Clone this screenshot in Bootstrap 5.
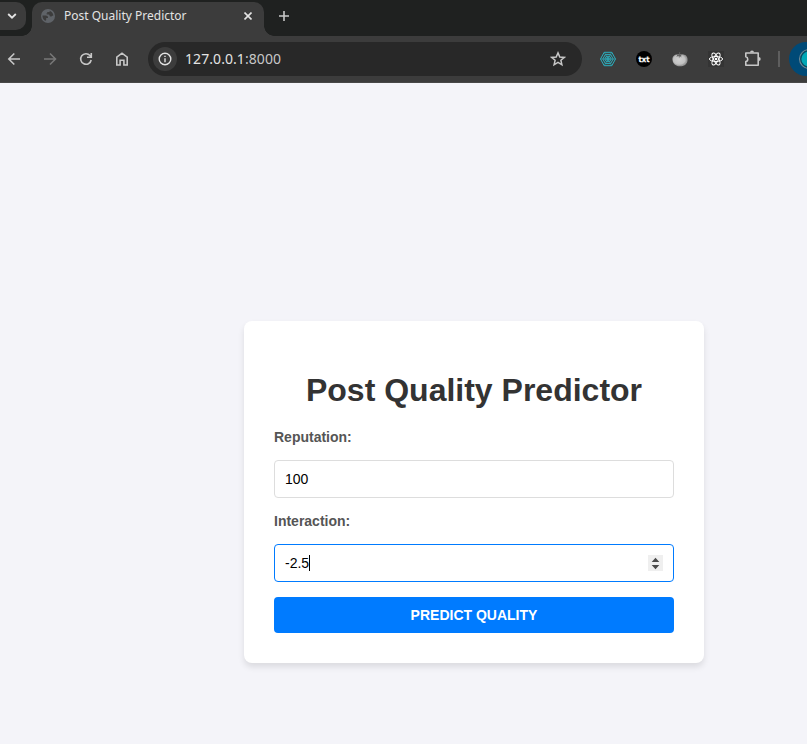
<!DOCTYPE html>
<html lang="en">
<head>
<meta charset="utf-8">
<meta name="viewport" content="width=device-width, initial-scale=1">
<title>Post Quality Predictor</title>
<link href="https://cdn.jsdelivr.net/npm/bootstrap@5.3.0/dist/css/bootstrap.min.css" rel="stylesheet">
<style>
body{background:#f4f4f9;font-family:"Liberation Sans",Arial,sans-serif;height:744px;overflow:hidden}
svg{display:block;flex:none}
.chrome-ui{font-family:"Noto Sans",sans-serif}
.tabstrip{height:36px;background:#1f2120}
.tab-search{width:26px;height:28px;margin-top:2px;background:#3c3c3c;border-radius:0 10px 10px 0}
.tab-search svg{margin-left:-2px}
.page-tab{position:relative;width:232px;height:34px;margin:2px 0 0 6px;padding:0 8px 6px 9px;background:#3c3c3c;border-radius:10px 10px 0 0;color:#e3e3e3;font-size:12px}
.page-tab::before,.page-tab::after{content:"";position:absolute;bottom:0;width:10px;height:10px}
.page-tab::before{left:-10px;background:radial-gradient(circle at 0 0,transparent 9.5px,#3c3c3c 10px)}
.page-tab::after{right:-10px;background:radial-gradient(circle at 100% 0,transparent 9.5px,#3c3c3c 10px)}
.tab-title{margin-left:9px;line-height:16px}
.toolbar{height:47px;background:#3c3c3c;border-bottom:1px solid #484848;overflow:hidden}
.tool{width:36px;flex:none}
.nav-tools{margin-left:-4px}
.address{width:434px;height:34px;margin:0 8px;padding:0 16px 0 5px;border-radius:17px;background:#282828;color:#e3e3e3;font-size:14px;flex:none}
.url{padding-bottom:2px;letter-spacing:.07px}
.site-info{width:24px;height:24px;background:#3c3c3c;margin-right:8px}
.port{color:#c7c7c7}
.divider{width:2px;height:16px;margin-left:8px;background:#5e5e5e;flex:none}
.avatar{margin-left:9px}
.predictor{width:460px;margin:238px 0 0 244px;padding:30px;border:0;border-radius:8px;box-shadow:0 4px 6px rgba(0,0,0,.1)}
.predictor h1{font-size:32px;font-weight:700;line-height:37px;color:#333;margin:21px 0 20px}
.predictor .form-label{font-size:14px;font-weight:700;color:#555;line-height:16px;margin-bottom:15px}
.predictor .form-control{height:38px;padding:0 10px;font-size:14px;line-height:16px;color:#000;border:1px solid #ddd;border-radius:4px;margin-bottom:15px}
.predictor .form-control.active-field{border-color:#007bff}
.caret{width:1px;height:16px;background:#000}
.stepper{width:15px;height:16px;background:#efefef}
.predictor .btn{height:36px;padding:0;border:0;border-radius:4px;background:#007bff;font-size:14px;font-weight:700}
</style>
</head>
<body>
<header class="chrome-ui">
  <div class="tabstrip d-flex">
    <div class="tab-search d-flex align-items-center justify-content-center">
      <svg width="10" height="8" viewBox="0 0 10 8" fill="none" stroke="#e3e3e3" stroke-width="1.8"><path d="M1.2 2 5 5.7 8.8 2"/></svg>
    </div>
    <div class="page-tab d-flex align-items-center">
      <svg width="14" height="14" viewBox="0 0 14 14"><circle cx="7" cy="7" r="7" fill="#5f6368"/><path d="M1.5 6.6H4.6C6.6 6.6 7.2 7.7 7 9H5.2V10.8C5.2 11.8 4.4 12 3.4 11.2 2 10 1.4 8.4 1.5 6.6ZM8.6 1.7V3H6.2V4.4H5.2C5.6 5.6 7 5.3 8 5.6 8.6 6.1 8.4 7.4 9.6 7.6 10.8 7.6 10.6 6.6 12.4 6.4 12 4 10.6 2.4 8.6 1.7Z" fill="#3c3c3c"/></svg>
      <span class="tab-title">Post Quality Predictor</span>
      <svg class="ms-auto me-1" width="8" height="8" viewBox="0 0 8 8" stroke="#e3e3e3" stroke-width="1.6"><path d="M.5.5l7 7M7.5.5l-7 7"/></svg>
    </div>
    <svg class="ms-3" width="10" height="32" viewBox="0 0 10 32" stroke="#c7c7c7" stroke-width="1.6" overflow="visible"><path d="M-1 16H9M4 11V21"/></svg>
  </div>
  <div class="toolbar d-flex align-items-center">
    <div class="nav-tools d-flex flex-shrink-0">
      <div class="tool d-flex justify-content-center"><svg width="16" height="16" viewBox="0 0 16 16" fill="none" stroke="#c7c7c7" stroke-width="1.6"><path d="M14 8H3M8.3 2.5 2.8 8 8.3 13.5"/></svg></div>
      <div class="tool d-flex justify-content-center"><svg width="16" height="16" viewBox="0 0 16 16" fill="none" stroke="#777" stroke-width="1.6"><path d="M2 8H13M8 2.5 13.5 8 8 13.5"/></svg></div>
      <div class="tool d-flex justify-content-center"><svg width="16" height="16" viewBox="0 0 16 16" fill="none" stroke="#c7c7c7" stroke-width="1.6"><path d="M13.2 9A5.3 5.3 0 1 1 12 4.5L13.3 6M13.3 2V6.2H9"/></svg></div>
      <div class="tool d-flex justify-content-center"><svg width="16" height="16" viewBox="0 0 16 16" fill="none" stroke="#c7c7c7" stroke-width="1.6"><path d="M2.8 6.2 8 2.2 13.2 6.2V14H9.9V9.2H6.1V14H2.8Z"/></svg></div>
    </div>
    <div class="address d-flex align-items-center">
      <div class="site-info rounded-circle d-flex align-items-center justify-content-center flex-shrink-0"><svg width="14" height="14" viewBox="0 0 14 14" fill="none" stroke="#e3e3e3" stroke-width="1.4"><circle cx="7" cy="7" r="5.8"/><path d="M7 6.2V10.2M7 3.7V5.1"/></svg></div>
      <span class="url">127.0.0.1<span class="port">:8000</span></span>
      <svg class="ms-auto" width="16" height="16" viewBox="0 0 16 16" fill="none" stroke="#c7c7c7" stroke-width="1.5"><path d="M8 1.9 9.8 6 14.3 6.4 10.9 9.3 11.9 13.8 8 11.4 4.1 13.8 5.1 9.3 1.7 6.4 6.2 6Z"/></svg>
    </div>
    <div class="tool d-flex justify-content-center"><svg width="16" height="16" viewBox="0 0 16 16" fill="none" stroke="#2bb0c0" stroke-width="1"><path d="M.5 8 4.2 1.3H11.8L15.5 8 11.8 14.7H4.2ZM2.8 8 5.4 3.4H10.6L13.2 8 10.6 12.6H5.4ZM4.8 8 6.4 5.3H9.6L11.2 8 9.6 10.7H6.4Z"/><path d="M.5 8H15.5M4.2 1.3 11.8 14.7M11.8 1.3 4.2 14.7" stroke-width=".6"/><circle cx="8" cy="8" r="1.3"/></svg></div>
    <div class="tool d-flex justify-content-center"><svg width="16" height="16" viewBox="0 0 16 16"><circle cx="8" cy="8" r="8"/><text x="8" y="10.6" text-anchor="middle" textLength="11" lengthAdjust="spacingAndGlyphs" fill="#fff" stroke="#fff" stroke-width=".25" font-family="DejaVu Sans, sans-serif" font-weight="700" font-size="7.5">txt</text></svg></div>
    <div class="tool d-flex justify-content-center"><svg width="16" height="16" viewBox="0 0 16 16"><defs><radialGradient id="fruit" cx=".45" cy=".45"><stop offset="0" stop-color="#d0d0d0"/><stop offset=".75" stop-color="#c2c2c2"/><stop offset="1" stop-color="#989898"/></radialGradient></defs><path d="M.5 9C0 5 3 3 8 3.4 13 3 16 5 15.5 9.5 15 13.5 12 15.3 8 15.3S1 13 .5 9Z" fill="url(#fruit)"/><path d="M7.3 1 8.2 1.3 8.1 3.6 11 3.4 9 4.6 9.4 6.6 7.9 5 7.1 7.2 6.5 4.8 4.4 6 5.2 4.2 3.7 3.2 7.2 3.5Z" fill="#606060"/></svg></div>
    <div class="tool d-flex justify-content-center"><svg width="16" height="16" viewBox="0 0 16 16" fill="none" stroke="#fff" stroke-width="1"><path d="M0 0H16V16H0Z" fill="#343434" stroke="none"/><ellipse cx="8" cy="8" rx="6.6" ry="2.5"/><ellipse cx="8" cy="8" rx="6.6" ry="2.5" transform="rotate(60 8 8)"/><ellipse cx="8" cy="8" rx="6.6" ry="2.5" transform="rotate(120 8 8)"/><circle cx="8" cy="8" r="1.3" fill="#fff" stroke="none"/></svg></div>
    <div class="tool d-flex justify-content-center"><svg width="18" height="18" viewBox="0 0 18 18" overflow="visible"><path d="M2.8 3H15.2V15.2H2.8V11.6C5.4 11.2 5.4 7.2 2.8 6.7Z" fill="none" stroke="#c7c7c7" stroke-width="1.6" stroke-linejoin="round"/><path d="M7 2.5a2 2 0 0 1 4 0ZM15.7 7.1a2 2 0 0 1 0 4Z" fill="#c7c7c7"/></svg></div>
    <div class="divider"></div>
    <svg class="avatar" width="34" height="34" viewBox="0 0 34 34"><circle cx="17" cy="17" r="17" fill="#004a77"/><circle cx="20" cy="17" r="9.5" fill="#064961" stroke="#6d8996" stroke-width="1.1"/><circle cx="20" cy="17" r="7.6" fill="#00a6b5"/></svg>
  </div>
</header>
<main>
  <form class="predictor card">
    <h1 class="text-center">Post Quality Predictor</h1>
    <label class="form-label" for="reputation">Reputation:</label>
    <input class="form-control" id="reputation" type="text" value="100">
    <span class="form-label">Interaction:</span>
    <div class="form-control active-field d-flex align-items-center">
      <span>-2.5</span><span class="caret"></span>
      <span class="stepper ms-auto"><svg width="15" height="16" viewBox="0 0 15 16" fill="#4b4b4b"><path d="M3.7 7 7.5 2.8 11.3 7ZM3.7 10H11.3L7.5 14.2Z"/></svg></span>
    </div>
    <button class="btn btn-primary w-100" type="button">PREDICT QUALITY</button>
  </form>
</main>
<script src="https://cdn.jsdelivr.net/npm/bootstrap@5.3.0/dist/js/bootstrap.bundle.min.js"></script>
</body>
</html>
